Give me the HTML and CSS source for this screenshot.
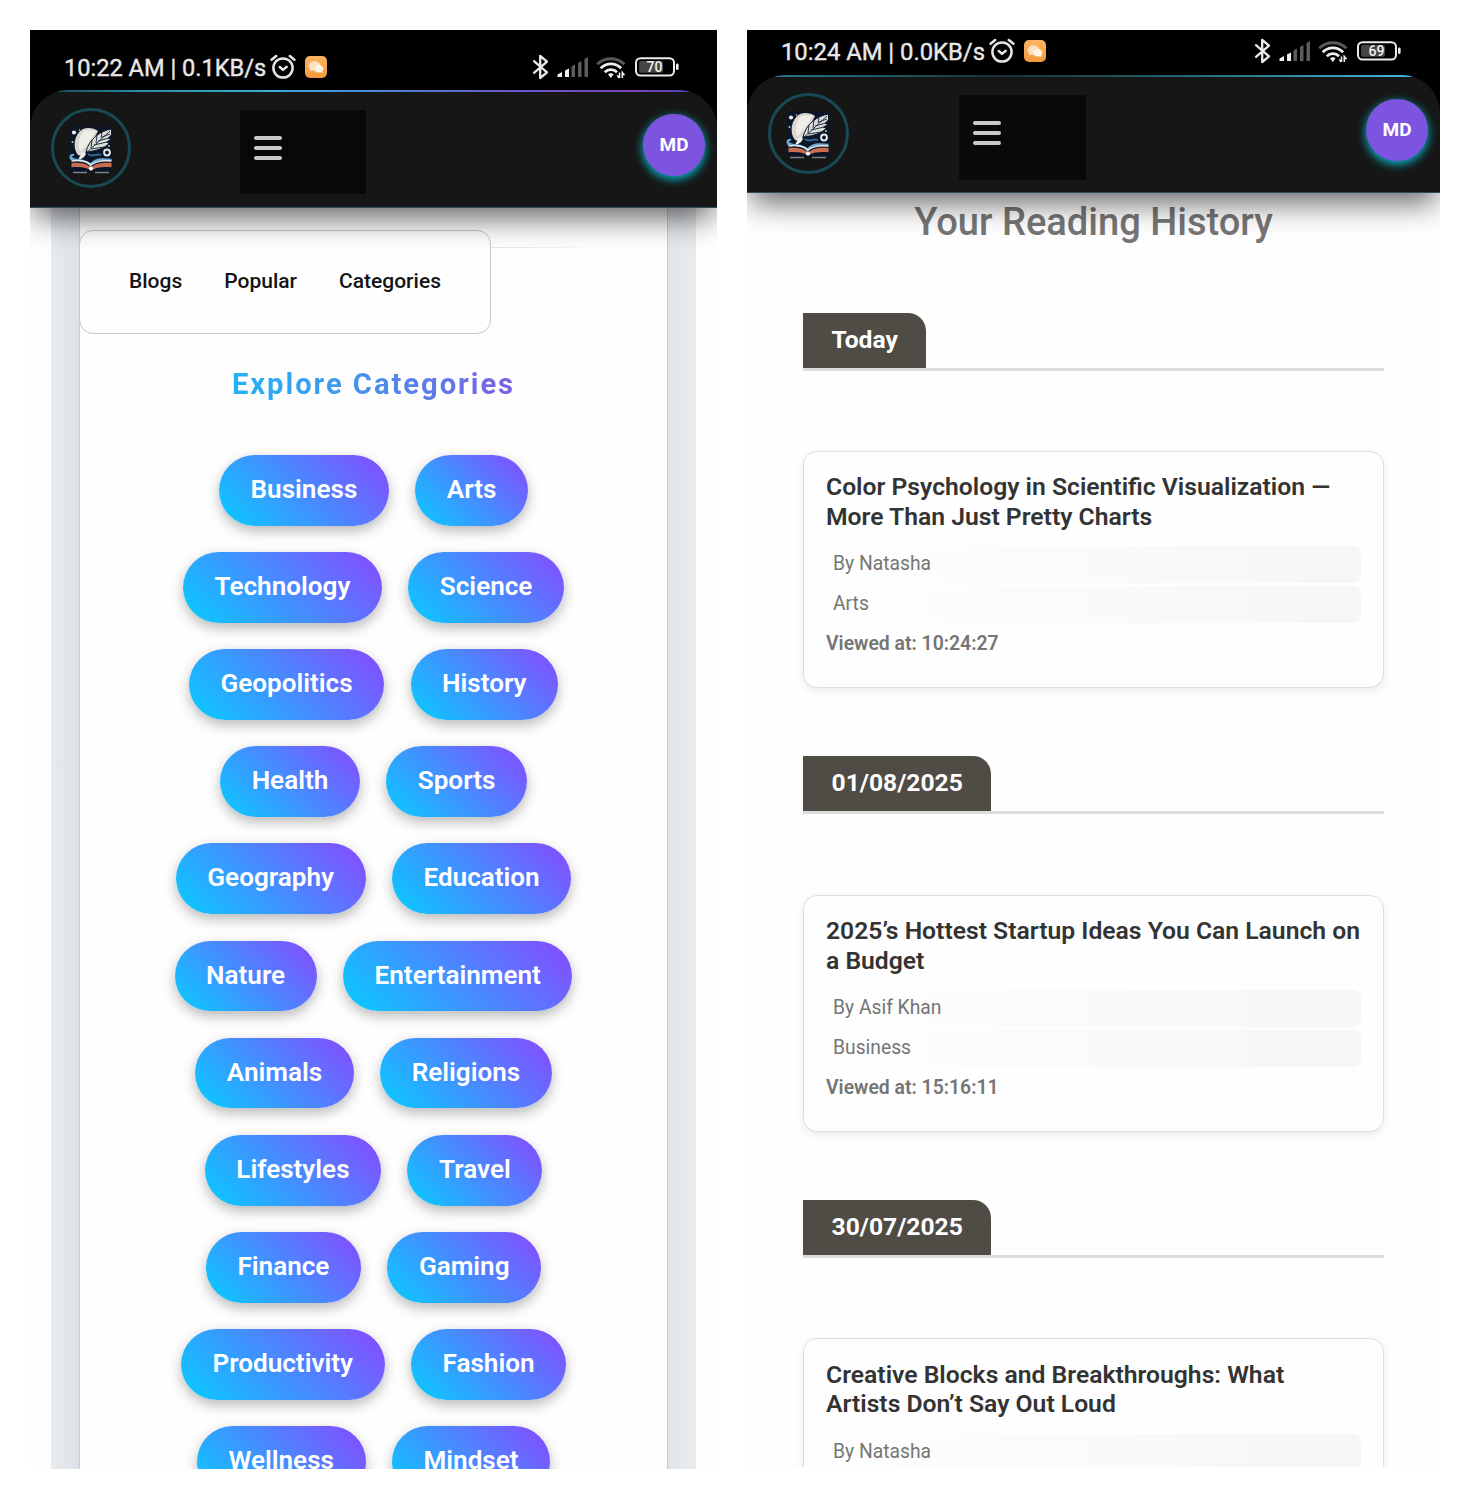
FILE: index.html
```html
<!DOCTYPE html>
<html lang="en">
<head>
<meta charset="utf-8">
<title>Explore Categories and Reading History</title>
<link rel="stylesheet" href="styles.css">
</head>
<body>
<svg class="defs" width="0" height="0" aria-hidden="true">
  <defs>
    <linearGradient id="orange" x1="0" y1="0" x2="0" y2="1"><stop offset="0" stop-color="#fbb464"/><stop offset="1" stop-color="#f59a3c"/></linearGradient>
    <symbol id="i-clock" viewBox="0 0 26 26">
      <g fill="none" stroke="#e6e6e6" stroke-width="2.5" stroke-linecap="round" stroke-linejoin="round">
        <circle cx="13" cy="14" r="9.6"/><path d="M1.6 5.8 6.2 2M24.4 5.8 19.8 2M9.8 13l3.2 2.9 3.6-3"/>
      </g>
    </symbol>
    <symbol id="i-chat" viewBox="0 0 22 22">
      <rect width="22" height="22" rx="5" fill="url(#orange)"/>
      <path d="M9.500 5.200c3.300 0 5.600 2 5.600 4.700s-2.300 4.800-5.600 4.800c-.8 0-1.600-.1-2.300-.3L4.700 15.300l.4-2.100C4.200 12.300 3.700 11.200 3.700 9.900c0-2.700 2.500-4.700 5.800-4.700z" fill="#fde0bd"/>
      <path d="M13.800 8.700c2.600 0 4.500 1.700 4.500 4 0 1-.4 2-1.100 2.600l.2 1.800-1.900-.8c-.5.2-1.100.3-1.700.3-2.600 0-4.500-1.700-4.500-3.900s1.900-4 4.500-4z" fill="#fff3e4"/>
    </symbol>
    <symbol id="i-bt" viewBox="0 0 17 26">
      <path d="M2 7.200 15 18.300 8.200 24V2L15 7.700 2 18.800" fill="none" stroke="#ececec" stroke-width="2.300" stroke-linejoin="round" stroke-linecap="round"/>
    </symbol>
    <symbol id="i-signal" viewBox="0 0 32 20">
      <path d="M.5 20v-2.500l4.500-2.500v5zM8 20v-6.500l4-2v8.500z" fill="#f2f2f2"/>
      <path d="M14.500 20V9.500l3.500-2V20zM21 20V6l3.500-2v16zM27.500 20V2l3.500-2v20z" fill="#5c5c5c"/>
    </symbol>
    <symbol id="i-wifi" viewBox="0 0 30 23">
      <g fill="none" stroke-width="2.800">
        <path d="M1.200 8.300a19.500 19.500 0 0 1 27.200 0" stroke="#595959"/>
        <path d="M4.700 12.200a14.300 14.300 0 0 1 20.400 0M8.800 16.200a8.500 8.500 0 0 1 12.200 0" stroke="#f0f0f0"/>
      </g>
      <path d="M14.800 17.300c1.500 0 2.300.7 2.700 1.200L14.800 22l-2.700-3.500c.4-.5 1.200-1.200 2.700-1.200z" fill="#f0f0f0"/>
      <path d="M23.500 16.500V22M21.200 19.500l2.100 2.500M26.300 22v-5.500l2.200 2.700" fill="none" stroke="#f0f0f0" stroke-width="1.600"/>
    </symbol>
    <symbol id="i-batt" viewBox="0 0 44 20">
      <rect x="1" y="1.200" width="38" height="17.300" rx="4.500" fill="none" stroke="#ececec" stroke-width="2"/>
      <rect x="4" y="4" width="24" height="11.700" rx="2" fill="#454545"/>
      <rect x="41" y="6.500" width="2.600" height="6.500" rx="1.200" fill="#ececec"/>
    </symbol>
    <symbol id="i-logo" viewBox="0 0 44 47">
      <rect x="1" y="0" width="42" height="45" rx="2" fill="#0a1628"/>
      <path d="M14 2C5 7 3 21 9 28c2 1.500 6-.5 10-5L29 4C25 1 19 .2 14 2z" fill="#d9d7d0"/>
      <path d="M16 3.500c-7 6-7 14-5 21l8-8 8-13z" fill="#efede7"/>
      <path d="M42.500 2C31 4 20 12 17 25l3.500-.5c9-1 18-5 20-9l-3-.2 5-3.600-3.500-.3 3.500-3.600z" fill="#dedcd4" stroke="#0a1628" stroke-width="1"/>
      <path d="M41 4 14 29M22 22l13-2M25 18l13-3M29 14l11-3M33 10l8-3M22 21l1-8M27 16l1-8M32 11l1-5" stroke="#22344c" stroke-width="1" fill="none"/>
      <path d="M9 33l3-6 3-2 2 2-2 3-6 4z" fill="#f1eee8"/>
      <circle cx="5" cy="5.500" r="2.100" fill="#e9edf0"/><circle cx="10.500" cy="3" r=".8" fill="#c8d4dd"/><circle cx="3.500" cy="15" r=".9" fill="#c8d4dd"/><circle cx="40" cy="19" r=".9" fill="#c8d4dd"/>
      <circle cx="38" cy="25.500" r="2.900" fill="none" stroke="#e5e8ea" stroke-width="2"/>
      <path d="M19 27c5 4 8-1 13 1" stroke="#35678d" stroke-width="2" fill="none"/>
      <path d="M5 33c-5-1-4-6 0-5M1.500 30c3 5 15 1 20 8 5-7 14-6 21-5" fill="none" stroke="#6ba8d4" stroke-width="2.300"/>
      <path d="M2.500 34c7-1 14.500-.500 19.500 4 5-4 12-5 20.500-4" fill="none" stroke="#e7e8e4" stroke-width="1.500"/>
      <path d="M2.500 36c7-.5 14.500 0 19.500 4.500 5-4.500 12-5 20.500-4.500v4.300c-8-.8-15.500-.3-20.500 3.500-5-4-12-4.300-19.500-3.500z" fill="#c96c50"/>
      <path d="M2 41.500c8-1 15 .2 20 3.500 5-3.300 12-4.500 20-3.500V45H2z" fill="#0a1628"/>
      <circle cx="22" cy="41.500" r="2" fill="#fff"/>
      <path d="M4 45.500h14M26 45.500h14" stroke="#7e8385" stroke-width="1.400"/>
    </symbol>
  </defs>
</svg>

<main class="stage">
  <section class="phone phone-left">
    <div class="status">
      <span class="clock">10:22 AM | 0.1KB/s</span>
      <svg class="ic-clock"><use href="#i-clock"/></svg>
      <svg class="ic-chat"><use href="#i-chat"/></svg>
      <svg class="ic-bt"><use href="#i-bt"/></svg>
      <svg class="ic-signal"><use href="#i-signal"/></svg>
      <svg class="ic-wifi"><use href="#i-wifi"/></svg>
      <svg class="ic-batt"><use href="#i-batt"/><text x="19.500" y="15" text-anchor="middle">70</text></svg>
    </div>
    <header class="nav">
      <div class="logo"><svg><use href="#i-logo"/></svg></div>
      <div class="menu"><i></i><i></i><i></i></div>
      <div class="avatar">MD</div>
    </header>
    <div class="frame">
      <div class="sheet">
        <nav class="tabs"><a>Blogs</a><a>Popular</a><a>Categories</a></nav>
        <h1 class="explore"><span>Explore Categories</span></h1>
        <div class="pills">
          <div class="row"><a>Business</a><a>Arts</a></div>
          <div class="row"><a>Technology</a><a>Science</a></div>
          <div class="row"><a>Geopolitics</a><a>History</a></div>
          <div class="row"><a>Health</a><a>Sports</a></div>
          <div class="row"><a>Geography</a><a>Education</a></div>
          <div class="row"><a>Nature</a><a>Entertainment</a></div>
          <div class="row"><a>Animals</a><a>Religions</a></div>
          <div class="row"><a>Lifestyles</a><a>Travel</a></div>
          <div class="row"><a>Finance</a><a>Gaming</a></div>
          <div class="row"><a>Productivity</a><a>Fashion</a></div>
          <div class="row"><a>Wellness</a><a>Mindset</a></div>
        </div>
      </div>
    </div>
  </section>

  <section class="phone phone-right">
    <div class="status">
      <span class="clock">10:24 AM | 0.0KB/s</span>
      <svg class="ic-clock"><use href="#i-clock"/></svg>
      <svg class="ic-chat"><use href="#i-chat"/></svg>
      <svg class="ic-bt"><use href="#i-bt"/></svg>
      <svg class="ic-signal"><use href="#i-signal"/></svg>
      <svg class="ic-wifi"><use href="#i-wifi"/></svg>
      <svg class="ic-batt"><use href="#i-batt"/><text x="19.500" y="15" text-anchor="middle">69</text></svg>
    </div>
    <header class="nav">
      <div class="logo"><svg><use href="#i-logo"/></svg></div>
      <div class="menu"><i></i><i></i><i></i></div>
      <div class="avatar">MD</div>
    </header>
    <div class="history">
      <h1 class="history-title">Your Reading History</h1>
      <section class="day">
        <div class="day-head"><h2>Today</h2></div>
        <article class="card">
          <h3>Color Psychology in Scientific Visualization —<br>More Than Just Pretty Charts</h3>
          <p class="meta">By Natasha</p>
          <p class="meta">Arts</p>
          <p class="viewed">Viewed at: 10:24:27</p>
        </article>
      </section>
      <section class="day">
        <div class="day-head"><h2>01/08/2025</h2></div>
        <article class="card">
          <h3>2025’s Hottest Startup Ideas You Can Launch on<br>a Budget</h3>
          <p class="meta">By Asif Khan</p>
          <p class="meta">Business</p>
          <p class="viewed">Viewed at: 15:16:11</p>
        </article>
      </section>
      <section class="day">
        <div class="day-head"><h2>30/07/2025</h2></div>
        <article class="card">
          <h3>Creative Blocks and Breakthroughs: What<br>Artists Don’t Say Out Loud</h3>
          <p class="meta">By Natasha</p>
        </article>
      </section>
    </div>
  </section>
</main>
</body>
</html>
```
FILE: styles.css
```css
* { box-sizing: border-box; }
body { margin: 0; background: #fff; font-family: Roboto, "Liberation Sans", sans-serif; }
h1, h2, h3, p { margin: 0; }
.defs { display: block; }
.stage { display: flex; gap: 30px; padding: 30px; height: 1500px; align-items: flex-start; overflow: hidden; }
.phone { overflow: hidden; flex: none; background: #fefefe; }
.phone-left { width: 687px; height: 1439px; }
.phone-right { width: 693px; height: 1437px; }

/* status bar */
.status { display: flex; align-items: center; background: #000; color: #e8e8e8; }
.phone-left .status { height: 102px; padding: 14px 38px 42px 34px; margin-bottom: -42px; }
.phone-right .status { height: 87px; padding: 0 39px 45px 34px; margin-bottom: -42px; }
.clock { width: 206px; padding-top: 2px; font-size: 23.600px; line-height: 30px; font-weight: 400; white-space: nowrap; -webkit-text-stroke: .4px #e8e8e8; }
.phone-right .clock { width: 208px; font-size: 23.800px; }
.status svg { flex: none; display: block; }
.ic-clock { width: 26px; height: 26px; }
.ic-chat { width: 22px; height: 22px; margin-left: 9px; }
.ic-bt { width: 17px; height: 26px; margin-left: auto; }
.ic-signal { width: 32px; height: 20px; margin-left: 8px; }
.ic-wifi { width: 30px; height: 23px; margin-left: 7px; }
.ic-batt { width: 44px; height: 20px; margin-left: 9px; }
.ic-batt text { font-size: 14px; font-weight: 500; fill: #f2f2f2; }

/* app header */
.nav {
  position: relative; z-index: 2; display: flex; align-items: flex-start; overflow: hidden;
  height: 118px; padding: 18px 12px 0 21px; background: #161616;
  border-radius: 38px 38px 0 0; border-bottom: 1.500px solid #2b4d55;
  box-shadow: 0 14px 30px -4px rgba(0, 0, 0, .6);
}
.phone-left .nav { height: 117.500px; }
.nav::before { content: ""; position: absolute; top: 0; left: 0; right: 0; height: 2px; }
.phone-left .nav::before { background: linear-gradient(90deg, #123b44, #2c8ea6 16%, #3caed4 35%, #4a86de 50%, #6a58cc 70%, #7a45c4 88%, #3c3aa0 100%); }
.phone-right .nav::before { background: linear-gradient(90deg, #2b7c8e, #1f5a67 20%, #173036 36%, #1f5560 55%, #2e8498 75%, #43b4dc 95%, #2a6a90); }
.logo { width: 80px; height: 80px; border: 3px solid #184a55; border-radius: 50%; display: flex; padding: 16px 0 0 15px; }
.logo svg { width: 44px; height: 47px; display: block; }
.menu { width: 126px; height: 84px; margin: 2px 0 0 109px; padding: 26px 0 0 14px; background: #090909; display: flex; flex-direction: column; gap: 6px; }
.menu i { width: 28px; height: 4px; border-radius: 2px; background: #c9c9c9; }
.avatar { width: 62px; height: 62px; margin: 6px 0 0 auto; border-radius: 50%; background: #7d54df; color: #fff; font-size: 19px; font-weight: 700; line-height: 61px; text-align: center; box-shadow: 0 3px 9px 1px #0aa5b5; }
.phone-right .logo { width: 81px; height: 81px; }
.phone-right .menu { width: 127px; height: 85px; margin-left: 110px; }

/* categories */
.frame { margin: 0 21px; padding: 0 28px; height: 1270px; background: linear-gradient(90deg, #e7ebee 0, #dde2e8 28px, #e2e6eb 617px, #e8ebee 100%); }
.sheet { height: 100%; padding-top: 22.800px; background: #fefefe; border: solid #c0ced9; border-width: 0 1px; background-image: linear-gradient(90deg, #dde4ea, transparent); background-size: 120px 1px; background-position: 411px 39px; background-repeat: no-repeat; }
.tabs { display: flex; gap: 42px; width: 412px; height: 104px; margin-left: -1px; padding: 38px 0 0 49px; border: 1px solid #bccad5; border-radius: 14px; background: #fefefe; font-size: 21px; line-height: 25px; font-weight: 500; color: #141414; }
.explore { margin: 29.500px 0 51.300px; height: 40px; line-height: 40px; text-align: center; font-size: 29.200px; font-weight: 700; letter-spacing: 1.950px; white-space: nowrap; }
.explore span { background: linear-gradient(90deg, #24b2f6, #4a8eec 50%, #7a60e2); -webkit-background-clip: text; background-clip: text; color: transparent; }
.pills { display: flex; flex-direction: column; gap: 26.300px; }
.row { display: flex; justify-content: center; gap: 26.300px; }
.row a { height: 70.800px; padding: 0 31.600px; line-height: 68px; border-radius: 36px; font-size: 26.100px; font-weight: 600; color: #fff; background: linear-gradient(45deg, #06cdff, #8948ff); box-shadow: 0 5px 13px rgba(0, 0, 0, .28); white-space: nowrap; }

/* reading history */
.history { padding: 6px 56px 0; }
.history-title { height: 46px; line-height: 46px; text-align: center; font-size: 38.100px; font-weight: 500; color: #757575; white-space: nowrap; }
.day { height: 443.700px; }
.history-title + .day { margin-top: 67.700px; }
.day-head { display: flex; height: 58px; border-bottom: 3px solid #dcdcdc; }
.day-head h2 { height: 55px; padding: 0 28.500px; background: #4f4b45; border-radius: 0 18px 0 0; color: #fff; font-size: 24.650px; line-height: 53px; font-weight: 700; }
.card { height: 237.500px; margin-top: 80.200px; padding: 20.500px 22px 0; border: 1.500px solid #dedede; border-radius: 14px; background: #fefefe; box-shadow: 0 3px 8px rgba(0, 0, 0, .08); }
.card h3 { font-size: 24.700px; line-height: 29.700px; font-weight: 600; color: #333; white-space: nowrap; margin-bottom: 14.500px; }
.meta { height: 37px; margin-bottom: 3px; padding-left: 7px; border-radius: 7px; background: linear-gradient(90deg, #fefefe, #f6f6f6); font-size: 19.300px; line-height: 36px; color: #757575; }
.viewed { font-size: 19.400px; line-height: 36px; font-weight: 600; color: #757575; }
```
